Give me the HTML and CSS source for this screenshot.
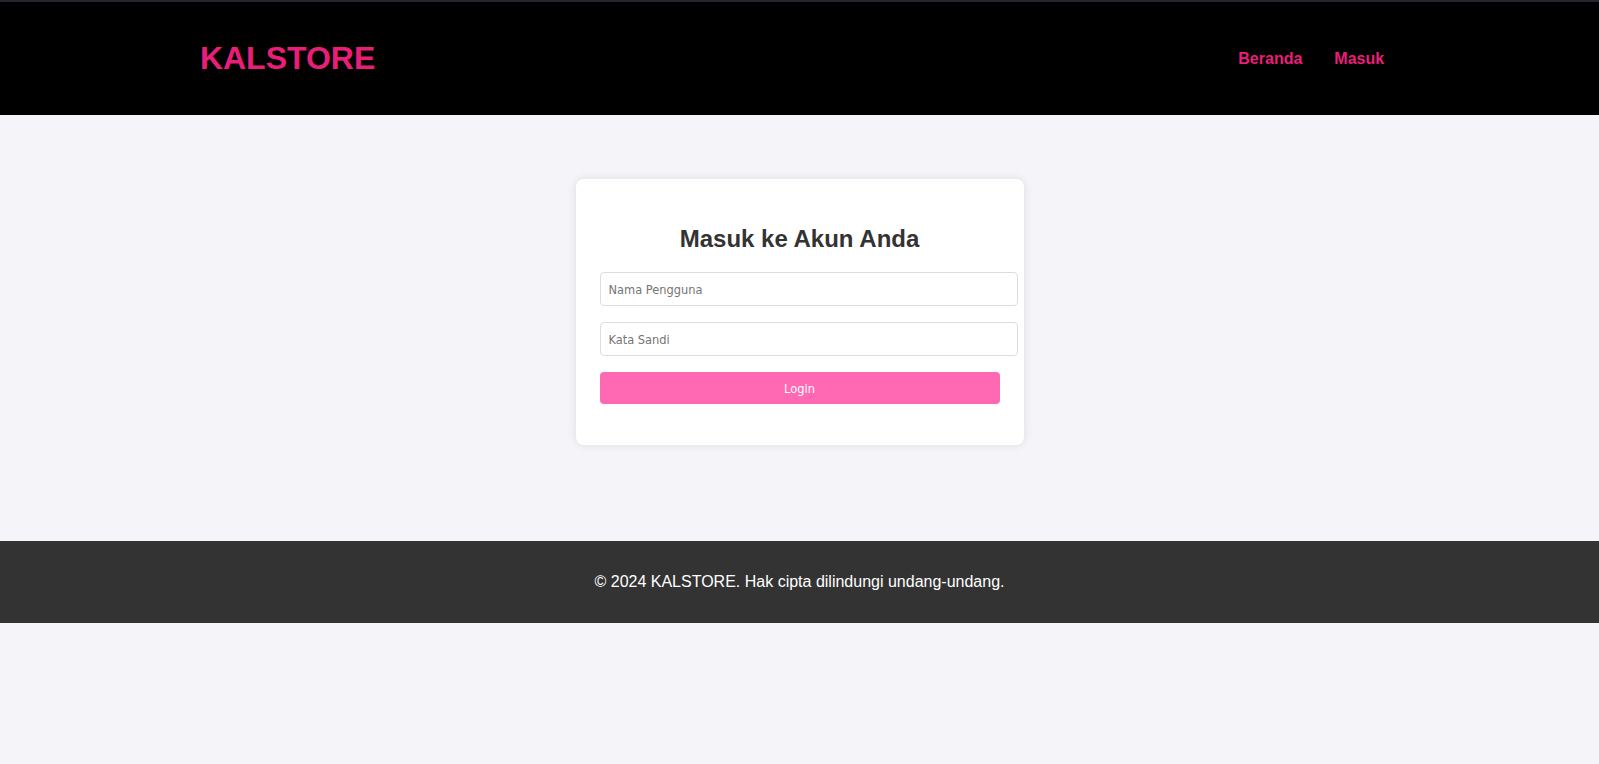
FILE: index.html
```html
<!DOCTYPE html>
<html lang="id">
<head>
<meta charset="utf-8">
<title>KALSTORE - Masuk</title>
<link rel="stylesheet" href="styles.css">
</head>
<body>
<header class="site-header">
  <div class="header-inner">
    <h1 class="logo">KALSTORE</h1>
    <nav>
      <ul class="nav">
        <li><a href="#">Beranda</a></li>
        <li><a href="#">Masuk</a></li>
      </ul>
    </nav>
  </div>
</header>
<main class="main">
  <div class="card">
    <h2 class="card-title">Masuk ke Akun Anda</h2>
    <form class="form">
      <div class="field"><input type="text" placeholder="Nama Pengguna"></div>
      <div class="field"><input type="password" placeholder="Kata Sandi"></div>
      <button type="button" class="btn">Login</button>
    </form>
  </div>
</main>
<footer class="site-footer">
  <p>© 2024 KALSTORE. Hak cipta dilindungi undang-undang.</p>
</footer>
</body>
</html>
```

FILE: styles.css
```css
html, body {
  margin: 0;
  padding: 0;
}
body {
  font-family: "Liberation Sans", Arial, sans-serif;
  background: #f4f4f9;
  color: #333;
}
.site-header {
  background: #000;
  border-top: 2px solid #25252e;
}
.header-inner {
  width: 75%;
  margin: 0 auto;
  height: 113px;
  display: flex;
  align-items: center;
  justify-content: space-between;
}
.logo {
  margin: 0;
  font-size: 32px;
  font-weight: bold;
  color: #e91e78;
}
.nav {
  display: flex;
  list-style: none;
  margin: 0;
  padding: 0;
}
.nav a {
  display: block;
  margin: 0 15px;
  color: #e91e78;
  font-weight: bold;
  font-size: 16px;
  text-decoration: none;
}
.nav li:first-child a {
  margin-right: 17px;
}
.main {
  padding: 64px 0 96px;
}
.card {
  width: 400px;
  margin: 0 auto;
  padding: 24px;
  background: #fff;
  border-radius: 8px;
  box-shadow: 0 0 10px rgba(0, 0, 0, 0.1);
}
.card-title {
  margin: 22px 0 19px;
  font-size: 24px;
  line-height: 28px;
  text-align: center;
  color: #333;
}
.form {
  margin: 0;
}
.field {
  margin-bottom: 16px;
}
.field input {
  display: block;
  width: 100%;
  height: 16px;
  padding: 8px;
  border: 1px solid #ddd;
  border-radius: 4px;
  font-family: "DejaVu Sans Condensed", "DejaVu Sans", sans-serif;
  font-size: 12.7px;
  color: #333;
  background: #fff;
  outline: none;
}
.field input::placeholder {
  color: #757575;
}
.btn {
  display: block;
  width: 100%;
  height: 32px;
  margin: 0 0 17px;
  padding: 0;
  border: none;
  border-radius: 4px;
  background: #ff69b4;
  color: #fff;
  font-family: "DejaVu Sans Condensed", "DejaVu Sans", sans-serif;
  font-size: 12.7px;
  cursor: pointer;
}
.site-footer {
  background: #333;
  color: #fff;
  padding: 16px 0;
  text-align: center;
}
.site-footer p {
  margin: 16px 0;
  font-size: 16px;
  line-height: 18px;
}
```
